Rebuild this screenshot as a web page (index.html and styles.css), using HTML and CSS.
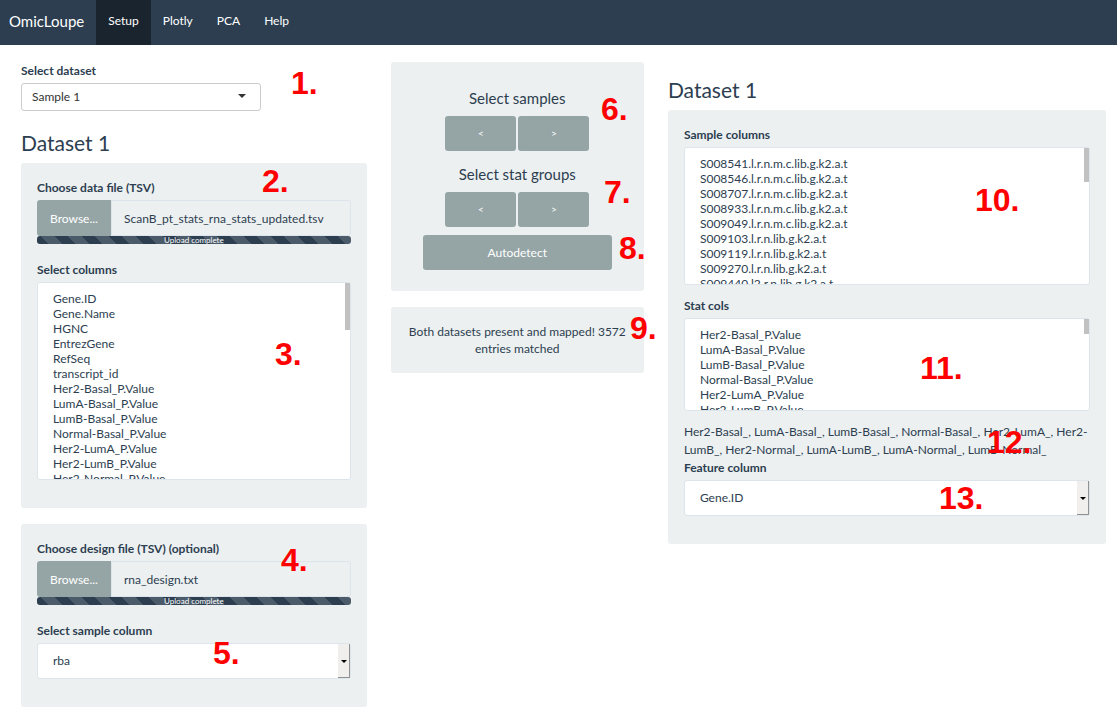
FILE: index.html
```html
<!DOCTYPE html>
<html lang="en">
<head>
<meta charset="utf-8">
<title>OmicLoupe</title>
<link rel="stylesheet" href="styles.css">
</head>
<body>
<nav class="navbar">
  <a class="brand" href="#">OmicLoupe</a>
  <a class="tab active" href="#">Setup</a>
  <a class="tab" href="#">Plotly</a>
  <a class="tab" href="#">PCA</a>
  <a class="tab" href="#">Help</a>
</nav>

<main class="layout">
  <section class="col-files">
    <label class="label" for="dataset">Select dataset</label>
    <div class="picker">
      <select id="dataset" class="picker-input"><option>Sample 1</option></select>
      <span class="picker-caret"></span>
    </div>
    <h2 class="heading">Dataset 1</h2>

    <div class="panel form-panel">
      <label class="label" for="data-name">Choose data file (TSV)</label>
      <div class="file">
        <button class="browse" type="button">Browse...</button>
        <input class="file-name" id="data-name" type="text" readonly value="ScanB_pt_stats_rna_stats_updated.tsv">
      </div>
      <div class="progress">Upload complete</div>
      <label class="label" for="columns">Select columns</label>
      <div class="list-wrap">
        <select class="list list-tall" id="columns" multiple>
          <option>Gene.ID</option>
          <option>Gene.Name</option>
          <option>HGNC</option>
          <option>EntrezGene</option>
          <option>RefSeq</option>
          <option>transcript_id</option>
          <option>Her2-Basal_P.Value</option>
          <option>LumA-Basal_P.Value</option>
          <option>LumB-Basal_P.Value</option>
          <option>Normal-Basal_P.Value</option>
          <option>Her2-LumA_P.Value</option>
          <option>Her2-LumB_P.Value</option>
          <option>Her2-Normal_P.Value</option>
        </select>
        <span class="thumb thumb-long"></span>
      </div>
    </div>

    <div class="panel form-panel">
      <label class="label" for="design-name">Choose design file (TSV) (optional)</label>
      <div class="file">
        <button class="browse" type="button">Browse...</button>
        <input class="file-name" id="design-name" type="text" readonly value="rna_design.txt">
      </div>
      <div class="progress">Upload complete</div>
      <label class="label" for="sample-col">Select sample column</label>
      <div class="drop">
        <select class="drop-input" id="sample-col"><option>rba</option></select>
        <span class="drop-button"></span>
      </div>
    </div>
  </section>

  <section class="col-actions">
    <div class="panel actions">
      <h3 class="subheading">Select samples</h3>
      <div class="pair">
        <button class="btn btn-arrow" type="button">&lt;</button>
        <button class="btn btn-arrow" type="button">&gt;</button>
      </div>
      <h3 class="subheading">Select stat groups</h3>
      <div class="pair">
        <button class="btn btn-arrow" type="button">&lt;</button>
        <button class="btn btn-arrow" type="button">&gt;</button>
      </div>
      <button class="btn btn-wide" type="button">Autodetect</button>
    </div>
    <div class="panel status">Both datasets present and mapped! 3572 entries matched</div>
  </section>

  <section class="col-mapping">
    <h2 class="heading">Dataset 1</h2>
    <div class="panel form-panel">
      <label class="label" for="samples">Sample columns</label>
      <div class="list-wrap">
        <select class="list list-medium" id="samples" multiple>
          <option>S008541.l.r.n.m.c.lib.g.k2.a.t</option>
          <option>S008546.l.r.n.m.c.lib.g.k2.a.t</option>
          <option>S008707.l.r.n.m.c.lib.g.k2.a.t</option>
          <option>S008933.l.r.n.m.c.lib.g.k2.a.t</option>
          <option>S009049.l.r.n.m.c.lib.g.k2.a.t</option>
          <option>S009103.l.r.n.lib.g.k2.a.t</option>
          <option>S009119.l.r.n.lib.g.k2.a.t</option>
          <option>S009270.l.r.n.lib.g.k2.a.t</option>
          <option>S009440.l2.r.n.lib.g.k2.a.t</option>
        </select>
        <span class="thumb thumb-mid"></span>
      </div>
      <label class="label" for="stats">Stat cols</label>
      <div class="list-wrap">
        <select class="list list-short" id="stats" multiple>
          <option>Her2-Basal_P.Value</option>
          <option>LumA-Basal_P.Value</option>
          <option>LumB-Basal_P.Value</option>
          <option>Normal-Basal_P.Value</option>
          <option>Her2-LumA_P.Value</option>
          <option>Her2-LumB_P.Value</option>
        </select>
        <span class="thumb thumb-small"></span>
      </div>
      <div class="groups">Her2-Basal_, LumA-Basal_, LumB-Basal_, Normal-Basal_, Her2-LumA_, Her2-LumB_, Her2-Normal_, LumA-LumB_, LumA-Normal_, LumB-Normal_</div>
      <label class="label" for="feature">Feature column</label>
      <div class="drop">
        <select class="drop-input" id="feature"><option>Gene.ID</option></select>
        <span class="drop-button"></span>
      </div>
    </div>
  </section>
</main>

<span class="mark m1">1.</span>
<span class="mark m2">2.</span>
<span class="mark m3">3.</span>
<span class="mark m4">4.</span>
<span class="mark m5">5.</span>
<span class="mark m6">6.</span>
<span class="mark m7">7.</span>
<span class="mark m8">8.</span>
<span class="mark m9">9.</span>
<span class="mark m10">10.</span>
<span class="mark m11">11.</span>
<span class="mark m12">12.</span>
<span class="mark m13">13.</span>
</body>
</html>
```

FILE: styles.css
```css
* { box-sizing: border-box; }

body {
  margin: 0;
  position: relative;
  background: #fff;
  color: #2c3e50;
  font: 12px/17px Lato, "Liberation Sans", sans-serif;
}

button, input, select { font: inherit; color: inherit; margin: 0; }

/* Navigation */
.navbar {
  display: flex;
  height: 45px;
  background: #2c3e50;
}
.navbar a { color: #fff; text-decoration: none; line-height: 42px; padding: 0 12px; }
.navbar .brand { font-size: 15px; padding-left: 9px; }
.navbar .active { background: #1a242f; }

/* Page grid */
.layout {
  display: grid;
  grid-template-columns: repeat(12, 1fr);
  gap: 24px;
  align-items: start;
  padding: 17px 11px 9px 21px;
}
.col-files { grid-column: span 4; }
.col-actions { grid-column: span 3; }
.col-mapping { grid-column: span 5; padding-top: 16px; }

.panel { background: #ecf0f1; border-radius: 3px; padding: 16px; }
.panel + .panel { margin-top: 16px; }
.form-panel { padding: 16px 16px 28px; }

.heading { margin: 0; padding-bottom: 8px; font-size: 21px; line-height: 24px; font-weight: 400; }
.label { display: block; margin-bottom: 4px; font-weight: 700; }

/* Dataset picker */
.picker { position: relative; max-width: 240px; margin-bottom: 20px; }
.picker-input {
  display: block;
  width: 100%;
  height: 28px;
  padding: 0 10px 2px;
  appearance: none;
  background: #fff;
  border: 1px solid #ccc;
  border-radius: 3px;
  color: #333;
}
.picker-caret {
  position: absolute;
  right: 15px;
  top: 11px;
  border: 4px solid transparent;
  border-top-color: #333;
  border-bottom: 0;
  pointer-events: none;
}

/* File upload */
.file { display: flex; height: 36px; }
.browse {
  flex: none;
  width: 74px;
  padding: 0;
  border: 0;
  border-radius: 3px 0 0 3px;
  background: #95a5a6;
  color: #fff;
}
.file-name {
  flex: 1;
  min-width: 0;
  padding: 0 12px;
  background: #ecf0f1;
  border: 1px solid #dce4ec;
  border-radius: 0 3px 3px 0;
}
.progress {
  height: 8px;
  margin-bottom: 17px;
  border-radius: 3px;
  overflow: hidden;
  background: #2c3e50 linear-gradient(45deg, rgba(255,255,255,.15) 25%, transparent 25%, transparent 50%, rgba(255,255,255,.15) 50%, rgba(255,255,255,.15) 75%, transparent 75%) 4px 0 / 27px 27px;
  color: #fff;
  font-size: 8px;
  line-height: 8px;
  text-align: center;
}

/* List boxes */
.list-wrap { position: relative; }
.list {
  display: block;
  width: 100%;
  padding: 8px 15px;
  background: #fff;
  border: 1px solid #dce4ec;
  border-radius: 3px;
  scrollbar-width: none;
}
.list option { min-height: 15px; padding: 0; line-height: 15px; }
.list-tall { height: 198px; }
.list-medium { height: 138px; }
.list-short { height: 93px; }
.list-medium, .list-short { margin-bottom: 12px; }
.thumb { position: absolute; top: 1px; right: 1px; width: 5px; background: #c1c1c1; }
.thumb-long { height: 47px; }
.thumb-mid { height: 34px; }
.thumb-small { height: 15px; }
.groups { line-height: 18px; }

/* Drop-downs */
.drop { position: relative; }
.drop-input {
  display: block;
  width: 100%;
  height: 36px;
  padding: 0 15px 2px;
  appearance: none;
  background: #fff;
  border: 1px solid #dce4ec;
  border-radius: 3px;
}
.drop-button {
  position: absolute;
  top: 1px;
  right: 1px;
  bottom: 1px;
  width: 12px;
  background: #f0efee;
  border-right: 1px solid #919191;
  border-bottom: 1px solid #919191;
  pointer-events: none;
}
.drop-button::after {
  content: "";
  position: absolute;
  left: 3px;
  top: 16px;
  border: 3px solid transparent;
  border-top-color: #000;
  border-bottom: 0;
}

/* Actions */
.actions { display: flex; flex-direction: column; align-items: center; padding: 27px 32px 21px; }
.subheading { margin: 0; padding-bottom: 8px; font-size: 15px; line-height: 19px; font-weight: 400; }
.pair { display: flex; gap: 2px; margin-bottom: 14px; }
.pair:last-of-type { margin-bottom: 8px; }
.btn { height: 35px; padding: 0; border: 0; border-radius: 3px; background: #95a5a6; color: #fff; }
.btn-arrow { width: 71px; font-size: 10px; }
.btn-wide { width: 100%; }
.status { text-align: center; }

/* Numbered callouts */
.mark {
  position: absolute;
  color: #f00;
  font: bold 32px/32px "Liberation Sans", Arial, sans-serif;
  pointer-events: none;
}
.m1 { left: 291px; top: 67px; }
.m2 { left: 262px; top: 165px; }
.m3 { left: 275px; top: 338px; }
.m4 { left: 281px; top: 544px; }
.m5 { left: 213px; top: 637px; }
.m6 { left: 601px; top: 93px; }
.m7 { left: 604px; top: 176px; }
.m8 { left: 619px; top: 232px; }
.m9 { left: 630px; top: 312px; }
.m10 { left: 975px; top: 184px; }
.m11 { left: 920px; top: 352px; }
.m12 { left: 987px; top: 426px; }
.m13 { left: 939px; top: 482px; }
```
